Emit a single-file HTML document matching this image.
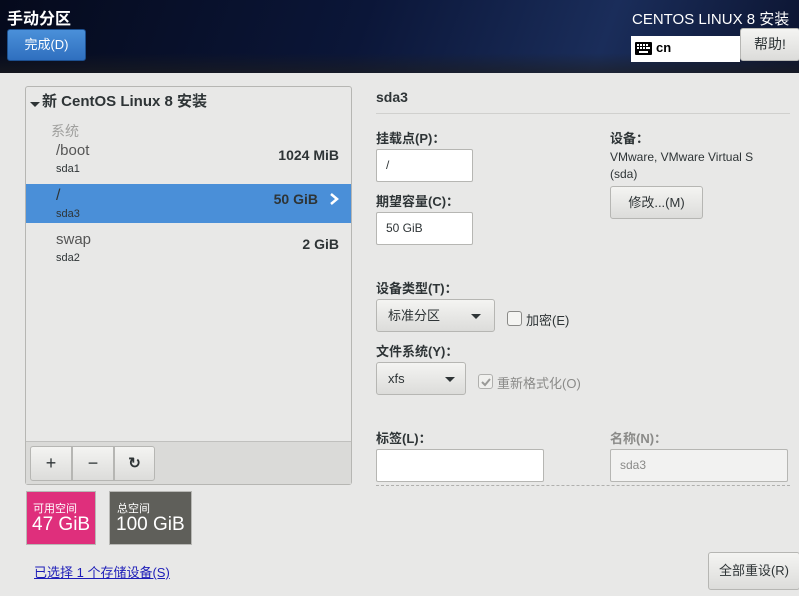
<!DOCTYPE html>
<html><head><meta charset="utf-8"><style>
*{box-sizing:border-box;margin:0;padding:0}
body{width:799px;height:596px;overflow:hidden;background:#e8e8e7;font-family:"Liberation Sans","Noto Sans CJK SC",sans-serif;color:#2e3436;position:relative;font-size:13px}
.a{position:absolute;white-space:nowrap}
.hdr{position:absolute;left:0;top:0;width:799px;height:73px;background:linear-gradient(110deg,#050a1c 0%,#0b1638 45%,#1a2d5a 75%,#0c1430 100%)}
.hdr:after{content:"";position:absolute;left:0;right:0;bottom:0;height:20px;background:linear-gradient(rgba(0,0,0,0),rgba(30,30,30,.6))}
.btn{position:absolute;border:1px solid #b6b6b3;border-radius:3px;background:linear-gradient(#f4f4f2,#dcdcda);text-align:center;color:#2e3436}
.inp{position:absolute;background:#fff;border:1px solid #b6b6b3;border-radius:2px;padding-left:9px;font-size:12px}
.lbl{position:absolute;font-weight:bold;font-size:13px;white-space:nowrap}
.tri{display:inline-block;width:0;height:0;border-left:5px solid transparent;border-right:5px solid transparent;border-top:5px solid #2e3436}
</style></head><body>
<div class="hdr"></div>
<div class="a" style="left:7px;top:5px;color:#fff;font-size:16px;font-weight:bold">手动分区</div>
<div class="a" style="left:7px;top:29px;width:79px;height:32px;border-radius:3px;background:linear-gradient(#4a90d9,#2f6fbf);border:1px solid #1c4f8f;color:#fff;text-align:center;line-height:30px;font-size:13px">完成(D)</div>
<div class="a" style="left:632px;top:8px;color:#fff;font-size:15px">CENTOS LINUX 8 安装</div>
<div class="a" style="left:631px;top:36px;width:109px;height:26px;background:#fff"></div>
<svg class="a" style="left:635px;top:42px" width="17" height="13"><rect x="0" y="0" width="17" height="13" rx="1" fill="#000"/><g fill="#fff"><rect x="2" y="2" width="2" height="2"/><rect x="5" y="2" width="2" height="2"/><rect x="8" y="2" width="2" height="2"/><rect x="11" y="2" width="2" height="2"/><rect x="2" y="5" width="2" height="2"/><rect x="5" y="5" width="2" height="2"/><rect x="8" y="5" width="2" height="2"/><rect x="11" y="5" width="4" height="2"/><rect x="4" y="9" width="9" height="2"/></g></svg>
<div class="a" style="left:656px;top:40px;font-weight:bold;font-size:13px;color:#000">cn</div>
<div class="btn" style="left:740px;top:28px;width:60px;height:33px;line-height:31px;font-size:14px">帮助!</div>

<div class="a" style="left:25px;top:86px;width:327px;height:399px;border:1px solid #b6b6b3;border-radius:3px;background:#e8e8e7"></div>
<div class="a" style="left:30px;top:96px"><span class="tri" style="vertical-align:middle"></span></div>
<div class="a" style="left:42px;top:90px;font-weight:bold;font-size:15px">新 CentOS Linux 8 安装</div>
<div class="a" style="left:51px;top:121px;color:#a0a09e;font-size:14px">系统</div>
<div class="a" style="left:56px;top:142px;font-size:15px;color:#555">/boot</div>
<div class="a" style="left:56px;top:163px;font-size:11px">sda1</div>
<div class="a" style="right:460px;top:147px;font-weight:bold;font-size:14px">1024 MiB</div>
<div class="a" style="left:26px;top:184px;width:325px;height:39px;background:#4a8fd8"></div>
<div class="a" style="left:56px;top:187px;font-size:16px">/</div>
<div class="a" style="left:56px;top:208px;font-size:11px">sda3</div>
<div class="a" style="right:481px;top:191px;font-weight:bold;font-size:14px">50 GiB</div>
<svg class="a" style="left:328px;top:192px" width="12" height="14"><path d="M3 2 L9 7 L3 12" stroke="#fff" stroke-width="2.5" fill="none"/></svg>
<div class="a" style="left:56px;top:231px;font-size:15px;color:#555">swap</div>
<div class="a" style="left:56px;top:252px;font-size:11px">sda2</div>
<div class="a" style="right:460px;top:236px;font-weight:bold;font-size:14px">2 GiB</div>
<div class="a" style="left:26px;top:441px;width:325px;height:43px;background:#dadad8;border-top:1px solid #c0c0be"></div>
<div class="btn" style="left:30px;top:446px;width:42px;height:35px;line-height:33px;font-size:18px;border-radius:3px 0 0 3px">+</div>
<div class="btn" style="left:72px;top:446px;width:42px;height:35px;line-height:33px;font-size:18px;border-radius:0">−</div>
<div class="btn" style="left:114px;top:446px;width:41px;height:35px;line-height:33px;font-size:15px;font-weight:bold;border-radius:0 3px 3px 0">↻</div>

<div class="a" style="left:26px;top:491px;width:70px;height:54px;background:#df2f7c;border:1px solid #b8b8b5"></div>
<div class="a" style="left:33px;top:500px;color:#fff;font-size:11px">可用空间</div>
<div class="a" style="left:32px;top:514px;color:#fff;font-size:19px">47 GiB</div>
<div class="a" style="left:109px;top:491px;width:83px;height:54px;background:#5f5f5a;border:1px solid #b8b8b5"></div>
<div class="a" style="left:117px;top:500px;color:#fff;font-size:11px">总空间</div>
<div class="a" style="left:116px;top:514px;color:#fff;font-size:19px">100 GiB</div>
<div class="a" style="left:34px;top:562px;color:#1d1db8;text-decoration:underline;font-size:13px">已选择 1 个存储设备(S)</div>

<div class="a" style="left:376px;top:89px;font-weight:bold;font-size:14px">sda3</div>
<div class="a" style="left:376px;top:113px;width:414px;height:1px;background:#d0d0ce"></div>
<div class="lbl" style="left:376px;top:128px">挂载点(P)：</div>
<div class="inp" style="left:376px;top:149px;width:97px;height:33px;line-height:31px">/</div>
<div class="lbl" style="left:376px;top:191px">期望容量(C)：</div>
<div class="inp" style="left:376px;top:212px;width:97px;height:33px;line-height:31px">50 GiB</div>
<div class="lbl" style="left:610px;top:128px">设备：</div>
<div class="a" style="left:610px;top:150px;font-size:12px">VMware, VMware Virtual S</div>
<div class="a" style="left:610px;top:167px;font-size:12px">(sda)</div>
<div class="btn" style="left:610px;top:186px;width:93px;height:33px;line-height:31px;font-size:13px">修改...(M)</div>

<div class="lbl" style="left:376px;top:278px">设备类型(T)：</div>
<div class="btn" style="left:376px;top:299px;width:119px;height:33px;line-height:31px;text-align:left;padding-left:11px;font-size:13px">标准分区<span class="tri" style="position:absolute;left:94px;top:14px"></span></div>
<div class="a" style="left:507px;top:311px;width:15px;height:15px;border:1px solid #8a8a88;border-radius:3px;background:#f4f4f2"></div>
<div class="a" style="left:526px;top:310px;font-size:13px">加密(E)</div>
<div class="lbl" style="left:376px;top:341px">文件系统(Y)：</div>
<div class="btn" style="left:376px;top:362px;width:90px;height:33px;line-height:31px;text-align:left;padding-left:11px;font-size:13px">xfs<span class="tri" style="position:absolute;left:68px;top:14px"></span></div>
<div class="a" style="left:478px;top:374px;width:15px;height:15px;border:1px solid #b0b0ae;border-radius:3px;background:#f0f0ee"></div>
<svg class="a" style="left:480px;top:376px" width="12" height="12"><path d="M2 6 L5 9 L10 3" stroke="#9a9a98" stroke-width="2" fill="none"/></svg>
<div class="a" style="left:497px;top:373px;font-size:13px;color:#8a8a88">重新格式化(O)</div>

<div class="lbl" style="left:376px;top:428px">标签(L)：</div>
<div class="inp" style="left:376px;top:449px;width:168px;height:33px"></div>
<div class="lbl" style="left:610px;top:428px;color:#8a8a88">名称(N)：</div>
<div class="inp" style="left:610px;top:449px;width:178px;height:33px;line-height:31px;background:#f2f2f1;color:#8a8a88">sda3</div>
<div class="a" style="left:376px;top:485px;width:414px;border-top:1px dashed #b0b0ae"></div>
<div class="btn" style="left:708px;top:552px;width:92px;height:38px;line-height:36px;font-size:13px">全部重设(R)</div>
</body></html>
